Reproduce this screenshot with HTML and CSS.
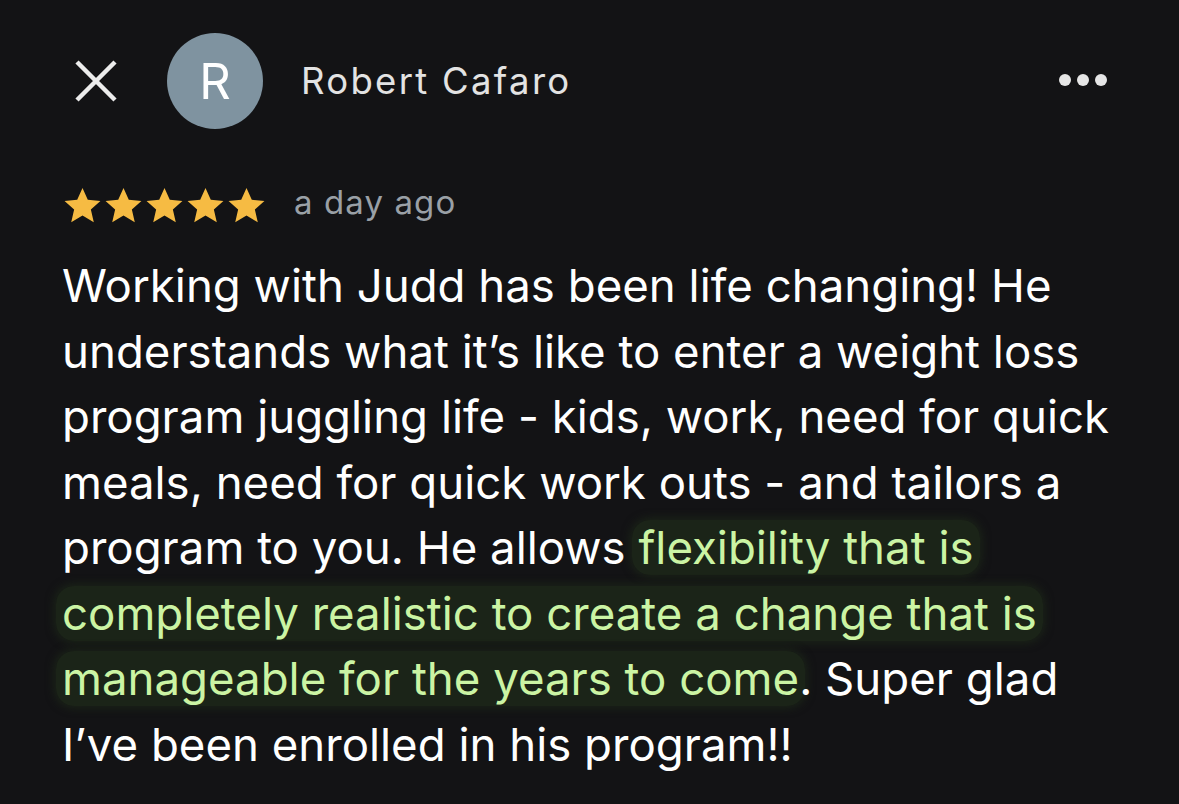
FILE: index.html
```html
<!DOCTYPE html>
<html>
<head>
<meta charset="utf-8">
<link rel="stylesheet" href="styles.css">
</head>
<body>
<main class="review">
  <header class="top">
    <button class="close" aria-label="Close">
      <svg width="44" height="44" viewBox="0 0 44 44"><path d="M3 3 L41 41 M41 3 L3 41" stroke="#ececec" stroke-width="4.5" stroke-linecap="butt"/></svg>
    </button>
    <div class="avatar">R</div>
    <div class="name">Robert Cafaro</div>
    <div class="more" aria-label="More">
      <span></span><span></span><span></span>
    </div>
  </header>
  <div class="meta">
    <div class="stars">
      <svg viewBox="0 0 24 24"><path d="M12 1.8l3.1 6.9 7.4.7-5.6 5 1.7 7.4L12 17.9l-6.6 3.9 1.7-7.4-5.6-5 7.4-.7z"/></svg>
      <svg viewBox="0 0 24 24"><path d="M12 1.8l3.1 6.9 7.4.7-5.6 5 1.7 7.4L12 17.9l-6.6 3.9 1.7-7.4-5.6-5 7.4-.7z"/></svg>
      <svg viewBox="0 0 24 24"><path d="M12 1.8l3.1 6.9 7.4.7-5.6 5 1.7 7.4L12 17.9l-6.6 3.9 1.7-7.4-5.6-5 7.4-.7z"/></svg>
      <svg viewBox="0 0 24 24"><path d="M12 1.8l3.1 6.9 7.4.7-5.6 5 1.7 7.4L12 17.9l-6.6 3.9 1.7-7.4-5.6-5 7.4-.7z"/></svg>
      <svg viewBox="0 0 24 24"><path d="M12 1.8l3.1 6.9 7.4.7-5.6 5 1.7 7.4L12 17.9l-6.6 3.9 1.7-7.4-5.6-5 7.4-.7z"/></svg>
    </div>
    <span class="when">a day ago</span>
  </div>
  <p class="text">Working with Judd has been life changing! He understands what it’s like to enter a weight loss program juggling life - kids, work, need for quick meals, need for quick work outs - and tailors a program to you. He allows <mark class="hl">flexibility that is completely realistic to create a change that is manageable for the years to come</mark>. Super glad I’ve been enrolled in his program!!</p>
</main>
</body>
</html>
```
FILE: styles.css
```css
html, body {
  margin: 0;
  padding: 0;
  background: #131315;
  width: 1179px;
  height: 804px;
  overflow: hidden;
}
body {
  font-family: Inter, "Noto Sans", sans-serif;
  color: #ffffff;
}
.review {
  padding: 33px 0 0 62px;
  width: 1065px;
}
.top {
  display: flex;
  align-items: center;
  height: 96px;
}
.close {
  background: none;
  border: 0;
  padding: 0;
  margin: 0 0 0 12px;
  width: 44px;
  height: 44px;
  display: flex;
}
.avatar {
  margin-left: 49px;
  width: 96px;
  height: 96px;
  border-radius: 50%;
  background: #7f93a0;
  color: #fff;
  font-size: 49px;
  display: flex;
  align-items: center;
  justify-content: center;
}
.name {
  margin-left: 38px;
  font-size: 36.5px;
  color: #e3e3e3;
  letter-spacing: 2.3px;
  flex: 1;
}
.more {
  display: flex;
  gap: 6px;
  margin-right: 20px;
  margin-top: -2px;
}
.more span {
  width: 12px;
  height: 12px;
  border-radius: 50%;
  background: #e6e6e6;
}
.meta {
  display: flex;
  align-items: center;
  margin-top: 56px;
  height: 40px;
}
.stars {
  display: flex;
  gap: 0;
}
.stars svg {
  width: 41px;
  height: 41px;
  fill: #f6bb43;
}
.when {
  margin-left: 27px;
  font-size: 33px;
  color: #9aa0a6;
  letter-spacing: 1.1px;
  margin-bottom: 6px;
}
.text {
  margin: 28px 0 0 0;
  font-size: 45.6px;
  line-height: 65.5px;
  color: #ffffff;
}
.hl {
  color: #cbf4a4;
  background: #1b2418;
  border-radius: 18px;
  padding: 0 6px;
  margin: 0 -6px;
  box-decoration-break: clone;
  -webkit-box-decoration-break: clone;
  box-shadow: 0 0 8px 2px #1b2418;
}
```
